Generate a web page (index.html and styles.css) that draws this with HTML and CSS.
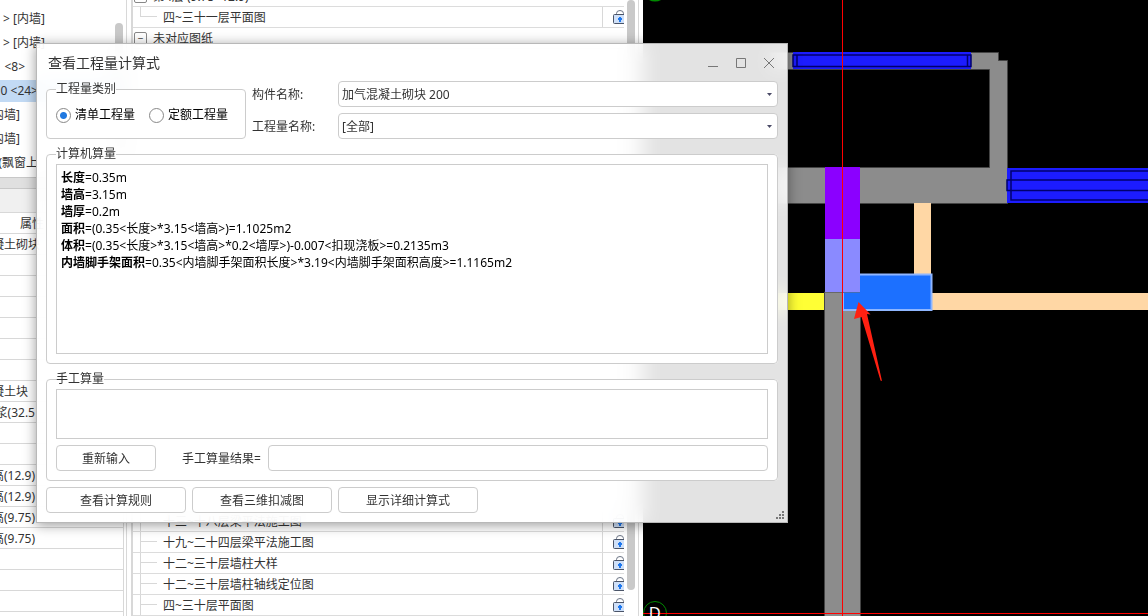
FILE: index.html
```
<!DOCTYPE html>
<html lang="zh-CN">
<head>
<meta charset="utf-8">
<title>查看工程量计算式</title>
<link rel="stylesheet" href="styles.css">
</head>
<body>
<svg class="defs" aria-hidden="true">
  <symbol id="lock" viewBox="0 0 11 16">
    <path d="M3.500 6V4.500Q3.500 1.500 7 1.500T10.500 4.500V6" fill="none" stroke="#6a7384"/>
    <path d="M12 5.500H1.500Q.5 5.500 .5 6.500V13.500Q.5 14.500 1.500 14.500H12" fill="#cfe0f8" stroke="#4a5468"/>
    <path d="M6 8H8V9H9V11H8V13H6V11H5V9H6Z" fill="#1f78ee"/>
  </symbol>
</svg>

<main class="workspace">
  <section class="left">
    <div class="components">
      <div class="comp to-46"><span>&gt; [内墙]</span></div>
      <div class="comp to-46"><span>&gt; [内墙]</span></div>
      <div class="comp to-26"><span>&lt;8&gt;</span></div>
      <div class="comp to-36 selected"><span>0 &lt;24&gt;</span></div>
      <div class="comp to-20"><span>内墙]</span></div>
      <div class="comp to-20"><span>内墙]</span></div>
      <div class="comp to-36"><span>(飘窗上</span></div>
      <div class="thumb left-thumb"></div>
    </div>
    <div class="splitter"></div>
    <div class="band"></div>
    <div class="props">
      <div class="prop to-44"><span>属性</span></div>
      <div class="prop to-40"><span>凝土砌块</span></div>
      <div class="prop"></div>
      <div class="prop"></div>
      <div class="prop"></div>
      <div class="prop"></div>
      <div class="prop"></div>
      <div class="prop"></div>
      <div class="prop to-28"><span>凝土块</span></div>
      <div class="prop to-36"><span>浆(32.5</span></div>
      <div class="prop"></div>
      <div class="prop"></div>
      <div class="prop to-36"><span>高(12.9)</span></div>
      <div class="prop to-36"><span>高(12.9)</span></div>
      <div class="prop to-36"><span>高(9.75)</span></div>
      <div class="prop to-36"><span>高(9.75)</span></div>
      <div class="prop"></div>
      <div class="prop"></div>
      <div class="prop"></div>
      <div class="prop"></div>
    </div>
  </section>

  <section class="middle">
    <div class="tree">
      <div class="node group"><span class="toggle">−</span><span class="name">第4层 (9.75~12.9)</span></div>
      <div class="node leaf last"><span class="branch"></span><span class="name">四~三十一层平面图</span><span class="lock"><svg><use href="#lock"/></svg></span></div>
      <div class="node group"><span class="toggle">−</span><span class="name">未对应图纸</span></div>
      <div class="gap"></div>
      <div class="node leaf"><span class="branch"></span><span class="name">十三~十八层梁平法施工图</span><span class="lock"><svg><use href="#lock"/></svg></span></div>
      <div class="node leaf"><span class="branch"></span><span class="name">十九~二十四层梁平法施工图</span><span class="lock"><svg><use href="#lock"/></svg></span></div>
      <div class="node leaf"><span class="branch"></span><span class="name">十二~三十层墙柱大样</span><span class="lock"><svg><use href="#lock"/></svg></span></div>
      <div class="node leaf"><span class="branch"></span><span class="name">十二~三十层墙柱轴线定位图</span><span class="lock"><svg><use href="#lock"/></svg></span></div>
      <div class="node leaf"><span class="branch"></span><span class="name">四~三十层平面图</span><span class="lock"><svg><use href="#lock"/></svg></span></div>
    </div>
    <div class="track"><div class="thumb"></div></div>
  </section>

  <section class="canvas">
    <svg viewBox="643 0 505 616" preserveAspectRatio="xMinYMin slice">
      <g fill="#8c8c8c" stroke="#444">
        <path d="M770 52.500H998.500V60.500H1007.500V203.500H770V167.500H989.500V69.500H770Z"/>
        <path d="M824.500 292V620H860.500V292Z"/>
      </g>
      <rect x="793" y="52" width="178" height="17" fill="#1c1cff"/>
      <g fill="none" stroke="#00006e" stroke-width="1.500">
        <path d="M793 55H971V66.500H793ZM797 55V66M967.500 55V66"/>
      </g>
      <rect x="1007" y="168" width="141" height="35" fill="#1c1cff"/>
      <path d="M1150 171H1011V200H1150M1150 180H1007V190.500H1150" fill="none" stroke="#00006e" stroke-width="1.500"/>
      <rect x="825" y="167" width="35" height="72" fill="#8b00ff"/>
      <rect x="825" y="239" width="35" height="53" fill="#8a8aff"/>
      <rect x="740" y="293" width="84" height="17" fill="#ffff35"/>
      <rect x="914" y="203" width="17" height="72" fill="#ffd7a5"/>
      <rect x="932" y="293" width="216" height="17" fill="#ffd7a5"/>
      <path d="M860 274.500H931.500V310.500H843V292.500H860Z" fill="#1c70ff"/>
      <path d="M860 274.500H931.500V310H843V293" fill="none" stroke="#8fb6ff" stroke-width="2"/>
      <circle cx="655" cy="613" r="11.500" fill="none" stroke="#008a00"/>
      <circle cx="655" cy="-11" r="11.500" fill="none" stroke="#008a00" stroke-width="2"/>
      <path d="M842.500 0V616M643 613.500H1148" stroke="#f00" fill="none"/>
      <text x="649" y="619" class="axis">D</text>
      <path d="M858.500 302L870.500 314.500L867 314L882 381L880.500 380.500L861.500 317L854 319Z" fill="#ff2012"/>
    </svg>
  </section>
</main>

<section class="dialog" role="dialog" aria-labelledby="dlg-title">
  <header class="titlebar">
    <h1 id="dlg-title">查看工程量计算式</h1>
    <button class="win" aria-label="最小化"><svg viewBox="0 0 12 12"><path d="M1 9.500H11"/></svg></button>
    <button class="win" aria-label="最大化"><svg viewBox="0 0 12 12"><path d="M1.500 1.500H10.500V10.500H1.500Z"/></svg></button>
    <button class="win" aria-label="关闭"><svg viewBox="0 0 12 12"><path d="M1 1L11 11M11 1L1 11"/></svg></button>
  </header>
  <form class="body">
    <div class="top">
      <fieldset class="kind">
        <legend>工程量类别</legend>
        <label><input type="radio" name="kind" checked>清单工程量</label>
        <label><input type="radio" name="kind">定额工程量</label>
      </fieldset>
      <div class="fields">
        <label for="comp">构件名称:</label>
        <div class="combo"><select id="comp"><option>加气混凝土砌块 200</option></select><svg viewBox="0 0 5 3"><path d="M0 0H5L2.500 3Z"/></svg></div>
        <label for="qty">工程量名称:</label>
        <div class="combo"><select id="qty"><option>[全部]</option></select><svg viewBox="0 0 5 3"><path d="M0 0H5L2.500 3Z"/></svg></div>
      </div>
    </div>
    <fieldset class="calc">
      <legend>计算机算量</legend>
      <div class="result">
        <p><b>长度</b>=0.35m</p>
        <p><b>墙高</b>=3.15m</p>
        <p><b>墙厚</b>=0.2m</p>
        <p><b>面积</b>=(0.35&lt;长度&gt;*3.15&lt;墙高&gt;)=1.1025m2</p>
        <p><b>体积</b>=(0.35&lt;长度&gt;*3.15&lt;墙高&gt;*0.2&lt;墙厚&gt;)-0.007&lt;扣现浇板&gt;=0.2135m3</p>
        <p><b>内墙脚手架面积</b>=0.35&lt;内墙脚手架面积长度&gt;*3.19&lt;内墙脚手架面积高度&gt;=1.1165m2</p>
      </div>
    </fieldset>
    <fieldset class="manual">
      <legend>手工算量</legend>
      <textarea aria-label="手工算量"></textarea>
      <div class="line">
        <button type="button" class="btn small">重新输入</button>
        <label for="res">手工算量结果=</label>
        <input id="res" type="text">
      </div>
    </fieldset>
    <footer class="actions">
      <button type="button" class="btn">查看计算规则</button>
      <button type="button" class="btn">查看三维扣减图</button>
      <button type="button" class="btn">显示详细计算式</button>
    </footer>
  </form>
  <svg class="grip" viewBox="0 0 8 8"><path d="M6 0h2v2h-2zM3 3h2v2h-2zM6 3h2v2h-2zM0 6h2v2h-2zM3 6h2v2h-2zM6 6h2v2h-2z"/></svg>
</section>
</body>
</html>
```
FILE: styles.css
```
* { box-sizing: border-box; }
body {
  margin: 0;
  height: 100vh;
  overflow: hidden;
  position: relative;
  background: #fff;
  color: #333;
  font: 12px/16px "Noto Sans", "Noto Sans CJK SC", sans-serif;
}
button, input, select, textarea { font: inherit; color: inherit; }
.defs { display: none; }
.workspace { display: flex; height: 100%; }

/* component list and property grid */
.left { flex: none; width: 127px; border-right: 1px solid #d8d8d8; overflow: hidden; }
.components { position: relative; height: 178px; padding-top: 8px; border-bottom: 1px solid #c8c8c8; }
.comp { display: flex; justify-content: flex-end; align-items: center; height: 22px; margin-bottom: 2px; white-space: nowrap; }
.selected { background: #c2daf4; }
.left-thumb { position: absolute; right: 3px; top: 23px; bottom: 20px; width: 8px; }
.to-20 { padding-right: 106px; }
.to-26 { padding-right: 101px; }
.to-28 { padding-right: 95px; }
.to-36 { padding-right: 88px; }
.to-40 { padding-right: 83px; }
.to-44 { padding-right: 79px; }
.to-46 { padding-right: 81px; }
.splitter { height: 11px; background: #e0e0e0; border-bottom: 1px solid #c8c8c8; }
.band { height: 24px; background: #f0f0f0; border-bottom: 1px solid #d8d8d8; }
.props { margin-right: 2px; border-right: 1px solid #d8d8d8; }
.prop { display: flex; justify-content: flex-end; align-items: center; height: 21px; padding-top: 2px; border-bottom: 1px solid #d8d8d8; white-space: nowrap; }
.thumb { border-radius: 4px; background: #c9c9c9; }

/* drawing list */
.middle { flex: none; display: flex; width: 516px; padding-left: 4px; overflow: hidden; }
.tree { flex: none; width: 493px; margin-top: -14px; border-left: 2px solid #d8d8d8; }
.node { display: flex; align-items: center; height: 21px; border-bottom: 1px solid #dcdcdc; white-space: nowrap; }
.group { gap: 6px; padding-left: 1px; }
.group .name { padding-top: 2px; }
.toggle { width: 13px; height: 13px; border: 1px solid #888; border-radius: 2px; font-size: 10px; line-height: 10px; text-align: center; }
.leaf { padding-left: 7px; align-items: stretch; }
.branch { width: 17px; border-left: 1px solid #d8d8d8; background: linear-gradient(#d8d8d8, #d8d8d8) 0 9px / 100% 1px no-repeat; }
.last .branch { border-left: 0; background: linear-gradient(#d8d8d8, #d8d8d8) 0 9px / 100% 1px no-repeat, linear-gradient(#d8d8d8, #d8d8d8) 0 0 / 1px 9px no-repeat; }
.leaf .name { flex: 1; padding: 3px 0 0 6px; }
.lock { width: 22px; padding-left: 10px; border-left: 1px solid #d8d8d8; }
.lock svg { display: block; width: 11px; height: 16px; margin-top: 2px; }
.gap { height: 462px; }
.track { flex: 1; height: 100%; margin-right: 4px; padding-left: 3px; border-right: 1px solid #d8d8d8; }
.track .thumb { width: 8px; height: 590px; }

/* plan view */
.canvas { flex: 1; min-width: 0; background: #000; }
.canvas svg { display: block; width: 100%; height: 100%; }
.axis { fill: #fff; font: 16px "Liberation Sans", sans-serif; }

/* dialog window */
.dialog {
  position: absolute;
  left: 36px;
  top: 43px;
  width: 752px;
  border: 1px solid #b8b8b8;
  background: rgba(255, 255, 255, .89);
  backdrop-filter: blur(10px);
  box-shadow: 0 2px 12px rgba(0, 0, 0, .4);
}
.titlebar { display: flex; align-items: center; gap: 16px; height: 37px; padding: 0 12px 0 11px; }
.titlebar h1 { flex: 1; margin: 0; font-size: 14px; line-height: 20px; font-weight: 400; }
.win { width: 12px; height: 12px; padding: 0; border: 0; background: none; }
.win svg { display: block; width: 12px; height: 12px; fill: none; stroke: #777; }
.body { padding: 0 9px 9px; }
.top { display: flex; gap: 6px; }
fieldset { min-width: 0; margin: 0; border: 1px solid #ccc; border-radius: 4px; background: #fff; }
legend { margin: 0; padding: 0; }
.kind { display: flex; gap: 14px; width: 200px; height: 58px; padding: 0 9px; white-space: nowrap; }
.kind label { display: flex; align-items: center; gap: 4px; height: 36px; color: #000; }
.kind input { flex: none; appearance: none; width: 15px; height: 15px; margin: 0; border: 1px solid #888; border-radius: 50%; background: #fff; }
.kind input:checked { background: radial-gradient(#1f78e0 3px, #fff 4px); }
.fields { flex: 1; display: grid; grid-template-columns: 80px 1fr; gap: 6px; align-content: start; align-items: center; }
.fields label { padding-top: 2px; }
.combo { position: relative; }
.combo svg { position: absolute; right: 6px; top: 12px; width: 5px; height: 3px; fill: #4a4a66; }
select { display: block; appearance: none; width: 100%; height: 26px; padding: 1px 3px 0; border: 1px solid #ccc; border-radius: 4px; background: #fff; }
.calc { margin-top: 7px; padding: 2px 9px 9px; }
.result { height: 190px; padding: 4px; border: 1px solid #ccc; color: #000; line-height: 17px; }
.result p { margin: 0; }
.manual { margin-top: 7px; padding: 2px 9px 9px; }
textarea { display: block; width: 100%; height: 50px; border: 1px solid #ccc; resize: none; }
.line { display: flex; align-items: center; margin-top: 6px; }
.line label { width: 80px; margin: 0 6px 0 26px; padding-top: 2px; white-space: nowrap; }
.line input { flex: 1; height: 26px; border: 1px solid #ccc; border-radius: 4px; background: #fff; }
.btn { width: 140px; height: 26px; padding: 2px 0 0; border: 1px solid #ccc; border-radius: 4px; background: #fff; }
.small { width: 100px; }
.actions { display: flex; gap: 6px; margin-top: 6px; }
.grip { position: absolute; right: 3px; bottom: 3px; width: 8px; height: 8px; fill: #777; }
```
